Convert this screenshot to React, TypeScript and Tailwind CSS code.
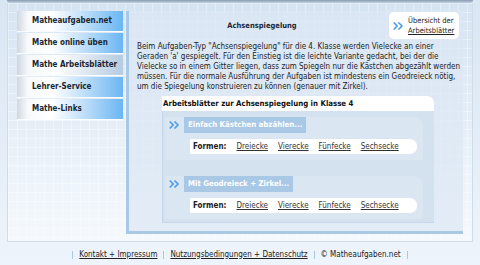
import React from "react";

const FONT = "[font-family:'DejaVu_Sans_Condensed','DejaVu_Sans',sans-serif]";

function Chev({ className = "" }: { className?: string }) {
  return (
    <svg width="11" height="8" viewBox="0 0 11 8" className={className}>
      <path
        d="M1.2 1 L4.2 4 L1.2 7 M6 1 L9 4 L6 7"
        fill="none"
        stroke="#4d9ce6"
        strokeWidth="1.7"
        strokeLinecap="round"
        strokeLinejoin="round"
      />
    </svg>
  );
}

const navItems = [
  { label: "Matheaufgaben.net", active: false },
  { label: "Mathe online üben", active: false },
  { label: "Mathe Arbeitsblätter", active: true },
  { label: "Lehrer-Service", active: false },
  { label: "Mathe-Links", active: false },
];

function FormRow() {
  const links = ["Dreiecke", "Vierecke", "Fünfecke", "Sechsecke"];
  return (
    <div className="mt-[6px] ml-[25px] mr-[6px] h-[15px] bg-white rounded-r-[7px] flex items-center pl-[3px] gap-[10px] text-[8px] text-[#222]">
      <span className="font-bold">Formen:</span>
      {links.map((l) => (
        <a key={l} className="underline text-[#333]" href="#">
          {l}
        </a>
      ))}
    </div>
  );
}

function SubBox({ title }: { title: string }) {
  return (
    <div className="bg-[#dae6f2] rounded-tr-[9px] h-[43px]">
      <div className="flex items-center h-[16px]">
        <Chev className="ml-[4px] mr-[4px]" />
        <div className="h-[16px] bg-[#a9c8e5] px-[4px] flex items-center text-white font-bold text-[7.8px]">
          {title}
        </div>
      </div>
      <FormRow />
    </div>
  );
}

export default function App() {
  return (
    <div
      className={`w-[480px] h-[265px] overflow-hidden bg-[linear-gradient(#d9e6f3,#eef4fb)] ${FONT} font-stretch-condensed text-[#1b2633]`}
    >
      {/* header bottom band */}
      <div className="mx-[7px] h-[3px] rounded-b-[3px] bg-[linear-gradient(#8c9db1,#c3d1e0)]" />
      {/* outer container */}
      <div className="mx-[7px] h-[239px] border-x border-b border-[#cfdcea] bg-[linear-gradient(rgba(255,255,255,0.35)_1px,transparent_1px),linear-gradient(90deg,rgba(255,255,255,0.35)_1px,transparent_1px),linear-gradient(#d6e4f2,#f5f9fd)] bg-[size:9px_9px,9px_9px,100%_100%] flex pt-[8px] pl-[9px]">
        {/* nav */}
        <div className="w-[106px] flex flex-col gap-[2px]">
          {navItems.map((n) => (
            <div
              key={n.label}
              className={`h-[20px] flex items-center pl-[15px] font-bold text-[8px] text-[#1b2633] shadow-[0_1px_0_rgba(255,255,255,0.8)] ${
                n.active
                  ? "bg-[linear-gradient(90deg,#cdd6e0_0%,#f4f7fa_10%,#ffffff_35%,#dfe8f1_65%,#b5cbe1_100%)]"
                  : "bg-[linear-gradient(90deg,#cfd8e2_0%,#f7f9fb_10%,#ffffff_33%,#c2e0f9_62%,#6ab6f3_100%)]"
              }`}
            >
              {n.label}
            </div>
          ))}
        </div>
        {/* content panel */}
        <div className="ml-[3px] w-[337px] h-[223px] border-l-[3px] border-b-[3px] border-[#a9c8e6] bg-[#dce7f3]/70 flex flex-col">
          <div className="flex items-start">
            <div className="flex-1 text-center font-bold text-[7.5px] leading-[10px] pt-[10px] pl-[6px]">
              Achsenspiegelung
            </div>
            <div className="mt-[1px] mr-[4px] w-[70px] h-[27px] bg-white rounded-[5px] flex items-center pl-[4px] gap-[4px]">
              <Chev />
              <div className="text-[7.5px] leading-[10px] text-[#222] pt-[1px]">
                <div>Übersicht der</div>
                <a href="#" className="underline">
                  Arbeitsblätter
                </a>
              </div>
            </div>
          </div>
          <div className="mt-[3px] pl-[8px] text-[8px] leading-[10px] text-[#222] whitespace-nowrap">
            Beim Aufgaben-Typ "Achsenspiegelung" für die 4. Klasse werden Vielecke an einer
            <br />
            Geraden 'a' gespiegelt. Für den Einstieg ist die leichte Variante gedacht, bei der die
            <br />
            Vielecke so in einem Gitter liegen, dass zum Spiegeln nur die Kästchen abgezählt werden
            <br />
            müssen. Für die normale Ausführung der Aufgaben ist mindestens ein Geodreieck nötig,
            <br />
            um die Spiegelung konstruieren zu können (genauer mit Zirkel).
          </div>
          {/* section */}
          <div className="mt-[4px] ml-[33px] w-[272px]">
            <div className="h-[15px] bg-white rounded-tr-[7px] flex items-center pl-[1px] font-bold text-[7.8px] text-[#111]">
              Arbeitsblätter zur Achsenspiegelung in Klasse 4
            </div>
            <div className="bg-[#d4e2f0] border-l border-b border-[#c4d7ea] pt-[6px] pl-[2px] pr-[11px] pb-[3px] flex flex-col gap-[16px]">
              <SubBox title="Einfach Kästchen abzählen..." />
              <SubBox title="Mit Geodreieck + Zirkel..." />
            </div>
          </div>
        </div>
      </div>
      {/* footer */}
      <div className="h-[23px] pt-[2px] flex items-center justify-center gap-[6px] text-[8px] text-[#222]">
        <span className="w-px h-[8px] bg-[#a9c8e6]" />
        <a href="#" className="underline">Kontakt + Impressum</a>
        <span className="w-px h-[8px] bg-[#a9c8e6]" />
        <a href="#" className="underline">Nutzungsbedingungen + Datenschutz</a>
        <span className="w-px h-[8px] bg-[#a9c8e6]" />
        <span>© Matheaufgaben.net</span>
        <span className="w-px h-[8px] bg-[#a9c8e6]" />
      </div>
    </div>
  );
}
